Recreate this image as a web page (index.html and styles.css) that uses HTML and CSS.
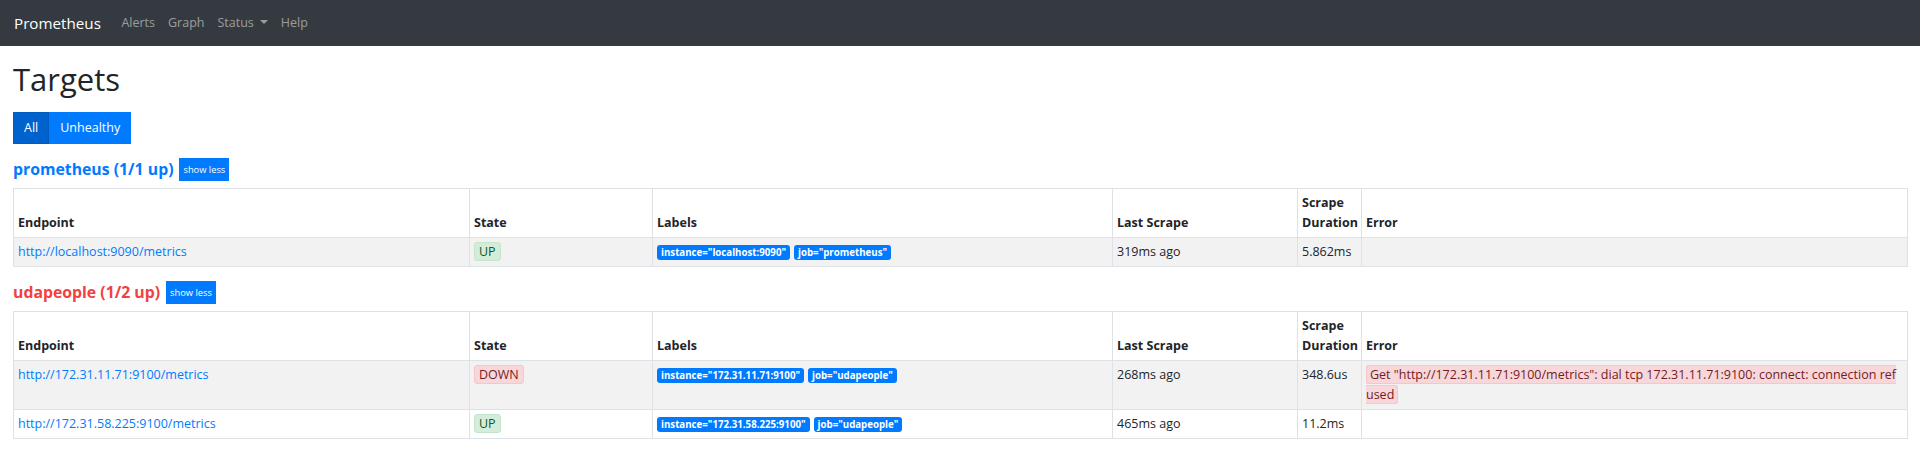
FILE: index.html
```html
<!DOCTYPE html>
<html lang="en">
<head>
<meta charset="utf-8">
<title>Prometheus Time Series Collection and Processing Server</title>
<link rel="stylesheet" href="styles.css">
</head>
<body>
<nav class="navbar">
  <a class="brand" href="#">Prometheus</a>
  <ul class="nav">
    <li><a class="nav-link" href="#">Alerts</a></li>
    <li><a class="nav-link" href="#">Graph</a></li>
    <li><a class="nav-link" href="#">Status<span class="caret"></span></a></li>
    <li><a class="nav-link" href="#">Help</a></li>
  </ul>
</nav>
<main class="container">
  <h1 class="page-title">Targets</h1>
  <div class="btn-group">
    <button class="btn active">All</button><button class="btn">Unhealthy</button>
  </div>

  <section class="pool">
    <div class="pool-head">
      <a class="pool-name" href="#">prometheus (1/1 up)</a>
      <button class="btn-xs">show less</button>
    </div>
    <table class="targets">
      <colgroup>
        <col class="c-endpoint"><col class="c-state"><col class="c-labels"><col class="c-last"><col class="c-dur"><col class="c-error">
      </colgroup>
      <thead>
        <tr><th>Endpoint</th><th>State</th><th>Labels</th><th>Last Scrape</th><th>Scrape Duration</th><th>Error</th></tr>
      </thead>
      <tbody>
        <tr>
          <td><a class="endpoint" href="#">http://localhost:9090/metrics</a></td>
          <td><span class="state up">UP</span></td>
          <td><span class="label">instance="localhost:9090"</span><span class="label">job="prometheus"</span></td>
          <td>319ms ago</td>
          <td>5.862ms</td>
          <td class="error-cell"></td>
        </tr>
      </tbody>
    </table>
  </section>

  <section class="pool">
    <div class="pool-head">
      <a class="pool-name danger" href="#">udapeople (1/2 up)</a>
      <button class="btn-xs">show less</button>
    </div>
    <table class="targets">
      <colgroup>
        <col class="c-endpoint"><col class="c-state"><col class="c-labels"><col class="c-last"><col class="c-dur"><col class="c-error">
      </colgroup>
      <thead>
        <tr><th>Endpoint</th><th>State</th><th>Labels</th><th>Last Scrape</th><th>Scrape Duration</th><th>Error</th></tr>
      </thead>
      <tbody>
        <tr>
          <td><a class="endpoint" href="#">http://172.31.11.71:9100/metrics</a></td>
          <td><span class="state down">DOWN</span></td>
          <td><span class="label">instance="172.31.11.71:9100"</span><span class="label">job="udapeople"</span></td>
          <td>268ms ago</td>
          <td>348.6us</td>
          <td class="error-cell"><span class="error">Get "http://172.31.11.71:9100/metrics": dial tcp 172.31.11.71:9100: connect: connection refused</span></td>
        </tr>
        <tr>
          <td><a class="endpoint" href="#">http://172.31.58.225:9100/metrics</a></td>
          <td><span class="state up">UP</span></td>
          <td><span class="label">instance="172.31.58.225:9100"</span><span class="label">job="udapeople"</span></td>
          <td>465ms ago</td>
          <td>11.2ms</td>
          <td class="error-cell"></td>
        </tr>
      </tbody>
    </table>
  </section>
</main>
</body>
</html>
```
FILE: styles.css
```css
* { box-sizing: border-box; }

body {
  margin: 0;
  font-family: "Open Sans", "Liberation Sans", sans-serif;
  font-size: 12.5px;
  line-height: 20px;
  color: #212529;
  background: #fff;
}

/* navbar */
.navbar {
  height: 46px;
  background: #343a40;
  display: flex;
  align-items: center;
  padding: 0 14px;
}
.brand {
  font-size: 15.2px;
  color: #fff;
  text-decoration: none;
  margin-right: 14px;
}
.nav {
  display: flex;
  list-style: none;
  margin: 0;
  padding: 0;
}
.nav-link {
  display: block;
  padding: 0 6.5px;
  color: rgba(255, 255, 255, 0.5);
  text-decoration: none;
}
.caret {
  display: inline-block;
  margin-left: 6px;
  vertical-align: 3px;
  border-top: 4px solid;
  border-left: 4px solid transparent;
  border-right: 4px solid transparent;
}

/* page */
.container { padding: 0 13px; }

.page-title {
  font-size: 31px;
  font-weight: 400;
  line-height: 38px;
  margin: 14px 0;
}

.btn-group { display: flex; }
.btn {
  font: inherit;
  color: #fff;
  background: #007bff;
  border: 1px solid #007bff;
  padding: 5px 10px;
  line-height: 20px;
  border-radius: 0;
}
.btn.active {
  background: #0062cc;
  border-color: #005cbf;
}

.pool-head {
  display: flex;
  align-items: center;
  gap: 6px;
  height: 23px;
  margin: 14px 0 7px;
}
.pool-name {
  font-size: 15.8px;
  line-height: 20px;
  font-weight: 700;
  color: #007bff;
  text-decoration: none;
  margin-top: -2px;
}
.pool-name.danger { color: rgb(242, 65, 65); }

.btn-xs {
  font: inherit;
  font-size: 9.3px;
  line-height: 15px;
  padding: 3px 3px;
  color: #fff;
  background: #007bff;
  border: 1px solid #007bff;
  border-radius: 0;
}

/* table */
.targets {
  width: 100%;
  table-layout: fixed;
  border-collapse: collapse;
  border: 1px solid #dee2e6;
}
.c-endpoint { width: 456px; }
.c-state { width: 183px; }
.c-labels { width: 460px; }
.c-last { width: 185px; }
.c-dur { width: 64px; }
.c-error { width: 546px; }

.targets th,
.targets td {
  border: 1px solid #dee2e6;
  padding: 4px;
  text-align: left;
}
.targets th {
  vertical-align: bottom;
  font-weight: 700;
}
.targets td { vertical-align: top; }
.targets tbody tr:nth-child(odd) { background: rgba(0, 0, 0, 0.05); }

.endpoint {
  color: #007bff;
  text-decoration: none;
}

.state {
  display: inline-block;
  vertical-align: top;
  padding: 0 4px;
  line-height: 17px;
  border: 1px solid;
  border-radius: 3px;
}
.state.up {
  background: #d4edda;
  border-color: #c3e6cb;
  color: #155724;
}
.state.down {
  background: #f8d7da;
  border-color: #f5c6cb;
  color: #721c24;
}

.label {
  display: inline-block;
  vertical-align: middle;
  font-size: 9.7px;
  font-weight: 700;
  line-height: 10px;
  padding: 2.5px 4px;
  border-radius: 3px;
  background: #007bff;
  color: #fff;
  margin-right: 4px;
}

.error-cell { word-break: break-all; }
.error {
  background: #f8d7da;
  color: #721c24;
  border: 1px solid #f5c6cb;
  border-radius: 3px;
  padding: 0 3px;
}
```
